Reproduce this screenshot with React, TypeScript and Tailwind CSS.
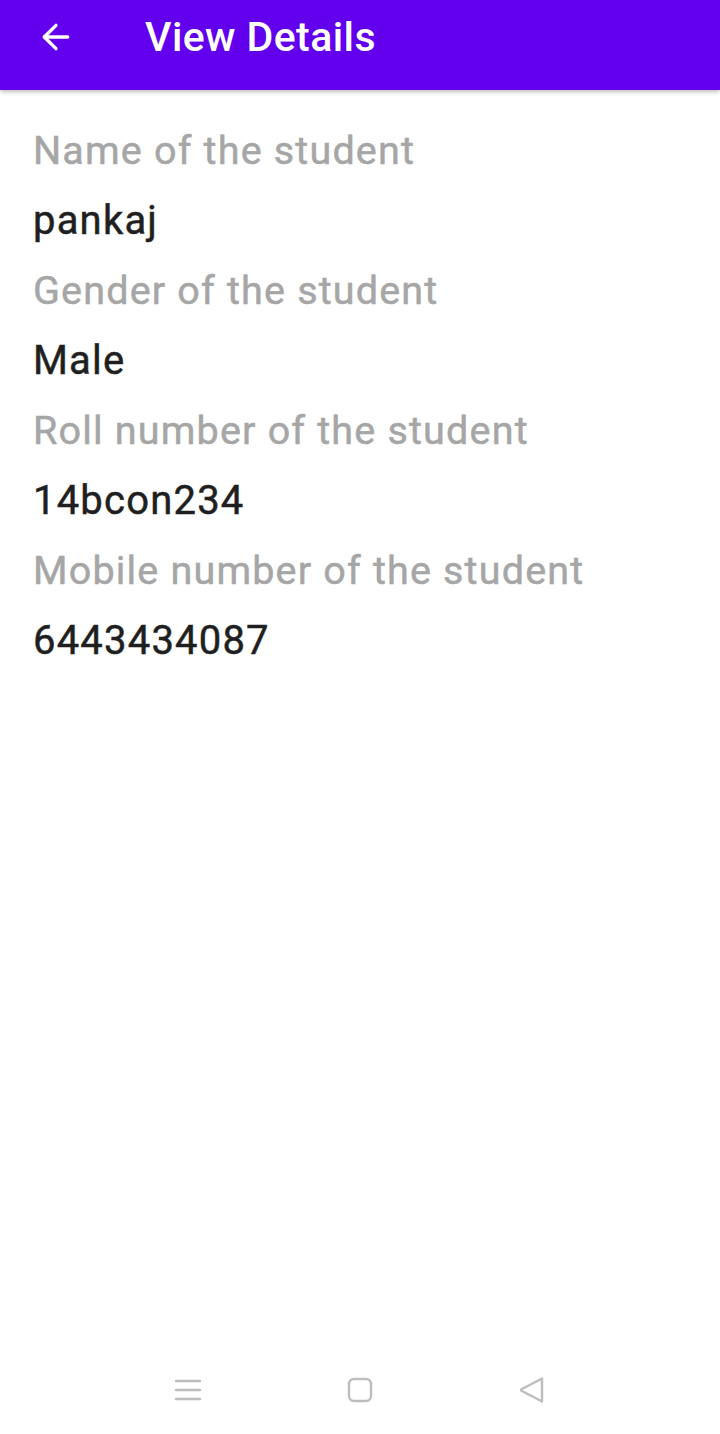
import { ArrowLeft } from 'lucide-react';

const details = [
  { label: 'Name of the student', value: 'pankaj' },
  { label: 'Gender of the student', value: 'Male' },
  { label: 'Roll number of the student', value: '14bcon234' },
  { label: 'Mobile number of the student', value: '6443434087' },
];

export default function App() {
  return (
    <div className="w-[720px] h-[1434px] flex flex-col bg-white font-['Roboto',sans-serif]">
      <header className="h-[90px] shrink-0 flex items-center bg-[#6200ee] shadow-[0_2px_4px_rgba(0,0,0,0.25)] pb-[16px]">
        <div className="w-[112px] flex justify-center">
          <ArrowLeft className="w-[40px] h-[40px] text-white" strokeWidth={2} />
        </div>
        <h1 className="ml-[33px] text-[41px] font-medium text-white tracking-[0.01em] leading-none">View Details</h1>
      </header>

      <main className="flex-1 flex flex-col px-[33px] pt-[26px]">
        {details.map((d) => (
          <div key={d.label} className="flex flex-col">
            <span className="text-[39.5px] leading-[70px] text-[#a6a6a6] tracking-[0.03em] [-webkit-text-stroke:0.5px_#a6a6a6]">
              {d.label}
            </span>
            <span className="text-[40px] leading-[70px] text-[#1f1f1f] tracking-[0.03em] [-webkit-text-stroke:0.5px_#1f1f1f]">
              {d.value}
            </span>
          </div>
        ))}
      </main>

      <nav className="h-[90px] shrink-0 flex items-center justify-center gap-[144px] pt-[2px]">
        <svg width="28" height="28" viewBox="0 0 28 28" className="text-[#bdbdbd]">
          <path d="M2 5h24M2 14h24M2 23h24" stroke="currentColor" strokeWidth="2.4" strokeLinecap="round" fill="none" />
        </svg>
        <svg width="28" height="28" viewBox="0 0 28 28" className="text-[#bdbdbd]">
          <rect x="3" y="3" width="22" height="22" rx="5" stroke="currentColor" strokeWidth="2.4" fill="none" />
        </svg>
        <svg width="28" height="28" viewBox="0 0 28 28" className="text-[#bdbdbd]">
          <path d="M24 2.5v23L3.5 14.8a1 1 0 0 1 0-1.6z" stroke="currentColor" strokeWidth="2.4" strokeLinejoin="round" fill="none" />
        </svg>
      </nav>
    </div>
  );
}
